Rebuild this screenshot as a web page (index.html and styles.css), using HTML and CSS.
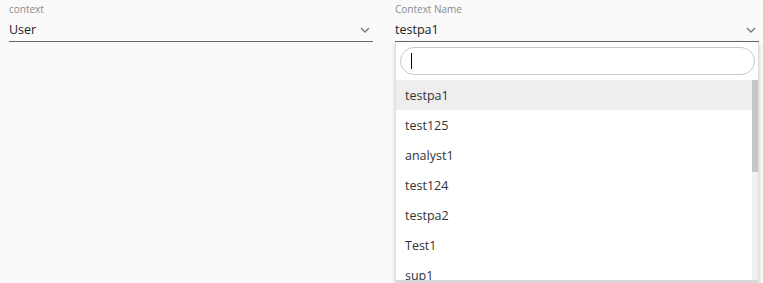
FILE: index.html
```html
<!DOCTYPE html>
<html lang="en">
  <head>
    <meta charset="UTF-8">
    <title>Context</title>
    <link rel="stylesheet" href="styles.css">
  </head>
  <body>
    <div class="row">
      <div class="fld">
        <span class="lb">context</span>
        <div class="val">User<svg class="chev" viewBox="0 0 10 6"><path d="M1 1l4 4 4-4"/></svg></div>
      </div>
      <div class="fld">
        <span class="lb">Context Name</span>
        <div class="val">testpa1<svg class="chev" viewBox="0 0 10 6"><path d="M1 1l4 4 4-4"/></svg></div>
        <div class="dd">
          <div class="sr"><div class="si"><span class="caret"></span></div></div>
          <div class="box">
            <ul class="ls">
              <li class="on">testpa1</li>
              <li>test125</li>
              <li>analyst1</li>
              <li>test124</li>
              <li>testpa2</li>
              <li>Test1</li>
              <li>sup1</li>
            </ul>
            <div class="sb"><div class="th"></div></div>
          </div>
        </div>
      </div>
    </div>
  </body>
</html>
```

FILE: styles.css
```css
html, body {height: 100%;}
body {margin: 0; background: #fafafa; color: #222; overflow: hidden;
  font-family: 'Open Sans', 'Noto Sans', sans-serif;}
.row {display: flex; gap: 22px; padding: 2px 4px 0 9px;}
.fld {flex: 1;}
.lb {display: block; font-size: 10px; line-height: 14px; color: #8a8a8a;}
.val {display: flex; align-items: center; justify-content: space-between;
  font-size: 12.5px; line-height: 18px; padding: 5px 0 2px;
  border-bottom: 1px solid #666;}
.chev {width: 10px; height: 6px; margin-right: 3px; fill: none;
  stroke: #777; stroke-width: 1.3;}
.dd {width: 362px; background: #fff; border: 1px solid #ddd; border-top: 0;
  box-shadow: 0 2px 4px #0003;}
.sr {padding: 5px 3px 5px 4px;}
.si {height: 28px; box-sizing: border-box; display: flex; align-items: center;
  border: 1px solid #c8c8c8; border-radius: 14px; padding: 0 10px;}
.caret {width: 1px; height: 16px; background: #000;}
.box {display: flex; height: 200px; overflow: hidden;}
.ls {flex: 1; list-style: none; margin: 0; padding: 0;}
.ls li {font-size: 12.5px; height: 30px; line-height: 28px; padding: 2px 0 0 9px;
  box-sizing: border-box; color: #333;}
.ls .on {background: #eee;}
.sb {width: 6px; background: #f1f1f1;}
.th {height: 92px; background: #c6c6c6;}
```
